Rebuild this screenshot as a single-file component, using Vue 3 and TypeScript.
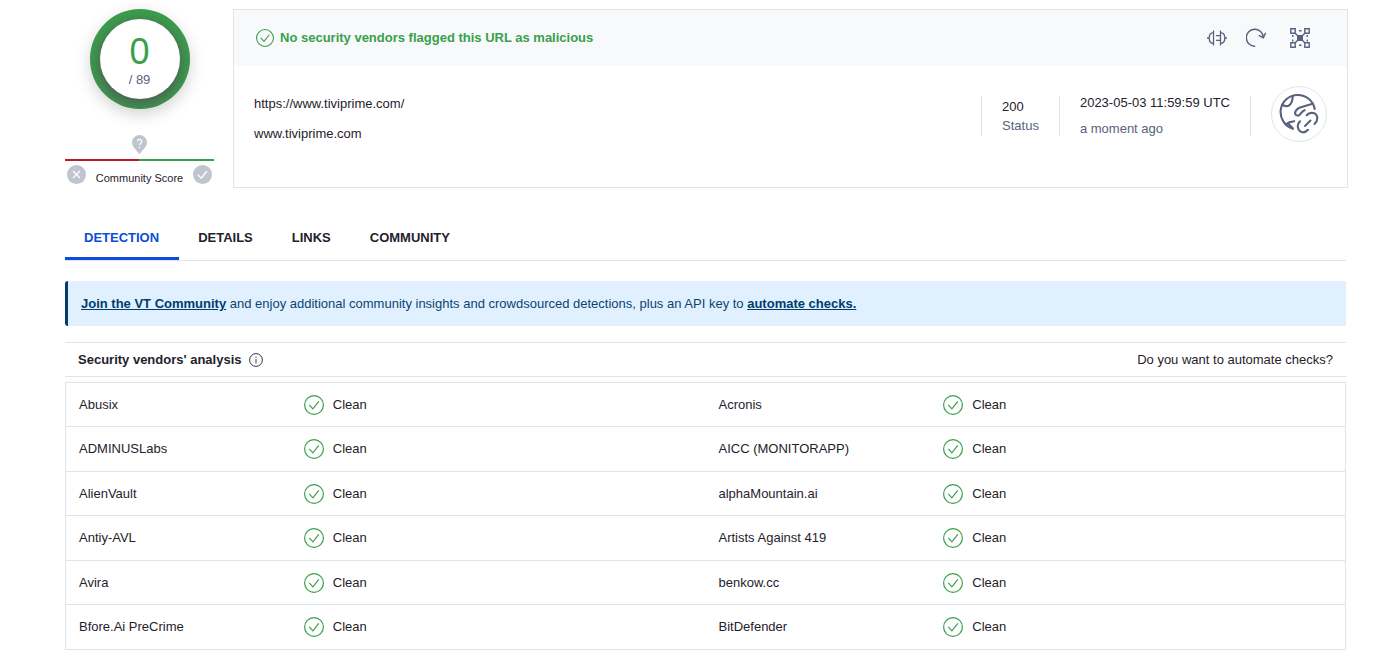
<script setup lang="ts">
import { ref } from 'vue'

const tabs: string[] = ['Detection', 'Details', 'Links', 'Community']
const active = ref<string>('Detection')

interface Verdict {
  left: string
  right: string
}

const rows: Verdict[] = [
  { left: 'Abusix', right: 'Acronis' },
  { left: 'ADMINUSLabs', right: 'AICC (MONITORAPP)' },
  { left: 'AlienVault', right: 'alphaMountain.ai' },
  { left: 'Antiy-AVL', right: 'Artists Against 419' },
  { left: 'Avira', right: 'benkow.cc' },
  { left: 'Bfore.Ai PreCrime', right: 'BitDefender' },
]
</script>

<template>
  <main class="page">
    <section class="summary">
      <div class="score">
        <div class="ring">
          <div class="dial">
            <span class="positives">0</span>
            <span class="total">/ 89</span>
          </div>
        </div>
        <svg class="pin" width="15" height="20" viewBox="0 0 15 20" aria-hidden="true">
          <path d="M7.500 0A7.500 7.500 0 0 1 15 7.500C15 12 10.500 14.500 7.500 19.500C4.500 14.500 0 12 0 7.500A7.500 7.500 0 0 1 7.500 0Z" fill="#c0c4d0" />
          <path d="M5.400 6.500C5.400 3.600 9.700 3.700 9.700 6.400C9.700 8.200 7.600 8.200 7.600 10.200" fill="none" stroke="#fff" stroke-width="1.200" />
          <circle cx="7.600" cy="12.300" r=".8" fill="#fff" />
        </svg>
        <div class="meter"></div>
        <div class="votes">
          <button class="vote" type="button" aria-label="Vote malicious">
            <svg width="19" height="19" viewBox="0 0 19 19"><path d="M6 6l7 7M13 6l-7 7" fill="none" stroke="#fff" stroke-width="1.300" /></svg>
          </button>
          <span class="votes-label">Community Score</span>
          <button class="vote" type="button" aria-label="Vote harmless">
            <svg width="19" height="19" viewBox="0 0 19 19"><path d="M4.800 9.600l3.400 3.600 5.800-7.200" fill="none" stroke="#fff" stroke-width="1.300" /></svg>
          </button>
        </div>
      </div>

      <article class="card">
        <header class="card-head">
          <svg class="ok" width="18" height="18" viewBox="0 0 20 20" aria-hidden="true">
            <circle cx="10" cy="10" r="9.400" /><path d="M5.300 9.800l3.600 4 5.900-7.400" />
          </svg>
          <strong class="verdict">No security vendors flagged this URL as malicious</strong>
          <div class="actions">
            <button type="button" aria-label="Search similar">
              <svg width="20" height="20" viewBox="0 0 20 20" fill="none" stroke="#58627c" stroke-width="1.300">
                <path d="M6.500 2.500v15M6.500 4.600C3.500 4.600 2.200 7 2.200 10s1.300 5.400 4.300 5.400M0 10h2.200M13.500 2.500v15M13.500 4.600c3 0 4.300 2.400 4.300 5.400s-1.300 5.400-4.300 5.400M17.800 10H20M9 7.700h4.500M9 12.300h4.500" />
              </svg>
            </button>
            <button type="button" aria-label="Reanalyze">
              <svg width="21" height="20" viewBox="0 0 21 20" fill="none" stroke="#58627c" stroke-width="1.400">
                <path d="M9.200 18.200A8.500 8.500 0 1 1 17.300 9.300M12.700 7.300l4.700 2.500 2.200-5" />
              </svg>
            </button>
            <button type="button" aria-label="Open in graph">
              <svg width="20" height="20" viewBox="0 0 20 20" fill="none" stroke="#58627c" stroke-width="1.400">
                <path d="M.8.8h4.400v4.400H.8zM14.800.8h4.400v4.400h-4.400zM.8 14.800h4.400v4.400H.8zM14.800 14.800h4.400v4.400h-4.400z" />
                <path d="M5.200 5.200l9.600 9.600M14.800 5.200l-9.600 9.600" />
                <path d="M9 2.700h2.500M9 17.300h2.500M2.700 7v2M2.700 11.500v2M17.300 7v2M17.300 11.500v2" />
                <path d="M7 7h6v6H7z" fill="#58627c" stroke="none" />
              </svg>
            </button>
          </div>
        </header>
        <div class="card-body">
          <div class="target">
            <span>https://www.tiviprime.com/</span>
            <span>www.tiviprime.com</span>
          </div>
          <div class="fact status">
            <span>200</span>
            <span class="muted">Status</span>
          </div>
          <div class="fact date">
            <span>2023-05-03 11:59:59 UTC</span>
            <span class="muted">a moment ago</span>
          </div>
          <div class="fact kind">
            <div class="globe">
              <svg width="40" height="42" viewBox="0 0 40 42" fill="none" stroke="#58627c" stroke-width="2.100" stroke-linecap="round" stroke-linejoin="round" aria-hidden="true">
                <path d="M13.800 35.600A17.200 17.200 0 1 1 35.700 16" />
                <path d="M3.600 12c5.200 3 9.800.2 10.200-9" />
                <path d="M33.700 10.800L21 14.500c-4.500 1.800-6 5.600-4 7.500 2.300 1.600 3.900-.2 5-1.800 1.200-1.600 2-2.400 3.600-3" />
                <path d="M6.700 31.500c2.500-2.400 4.500-3 8.600-3.300M9.300 30.500l4.500 5" />
                <path d="M27.700 22.200c3.600-4.200 10.600-2.400 10.600 3 0 3-1.200 4.400-2.800 5.800M21 28.300c-3.800 3.800-2.300 9.600 1.700 10.800 2.800.8 4.800-.6 6.300-2.300M26 33l5.500-5.500" />
              </svg>
            </div>
          </div>
        </div>
      </article>
    </section>

    <div class="content">
      <nav class="tabs" role="tablist">
        <button
          v-for="tab in tabs"
          :key="tab"
          type="button"
          role="tab"
          class="tab"
          :class="{ active: tab === active }"
          :aria-selected="tab === active"
          @click="active = tab"
        >{{ tab }}</button>
      </nav>

      <p class="banner">
        <a href="#">Join the VT Community</a> and enjoy additional community insights and crowdsourced detections, plus an API key to <a href="#">automate checks.</a>
      </p>

      <div class="analysis-head">
        <h2>Security vendors' analysis</h2>
        <svg width="14" height="14" viewBox="0 0 14 14" aria-hidden="true">
          <circle cx="7" cy="7" r="6.400" fill="none" stroke="#33363f" />
          <path d="M7 6v4.500M7 3.600v1.200" stroke="#33363f" />
        </svg>
        <a class="automate" href="#">Do you want to automate checks?</a>
      </div>

      <table class="vendors" aria-label="Security vendors' analysis">
        <tbody>
          <tr v-for="row in rows" :key="row.left">
            <template v-for="name in [row.left, row.right]" :key="name">
              <td class="name">{{ name }}</td>
              <td class="result">
                <span class="clean">
                  <svg class="ok" width="20" height="20" viewBox="0 0 20 20" aria-hidden="true">
                    <circle cx="10" cy="10" r="9.400" /><path d="M5.300 9.800l3.600 4 5.900-7.400" />
                  </svg>
                  Clean
                </span>
              </td>
            </template>
          </tr>
        </tbody>
      </table>
    </div>
  </main>
</template>

<style>
body {
  margin: 0;
  background: #fff;
}
</style>

<style scoped>
.page {
  box-sizing: border-box;
  padding: 9px 28px 0 65px;
  font-family: "Liberation Sans", Arial, sans-serif;
  font-size: 13px;
  line-height: 20px;
  color: #1f222b;
}
button {
  border: 0;
  padding: 0;
  background: none;
  font: inherit;
  color: inherit;
  cursor: pointer;
}
svg {
  display: block;
  flex: none;
}
.summary {
  display: flex;
  gap: 19px;
}
.score {
  flex: none;
  width: 149px;
  display: flex;
  flex-direction: column;
  align-items: center;
}
.ring {
  display: grid;
  place-items: center;
  width: 100px;
  height: 100px;
  border-radius: 50%;
  background: #39a04b;
  box-shadow: 0 5px 16px rgba(0, 0, 0, 0.18);
  overflow: hidden;
}
.dial {
  box-sizing: border-box;
  display: flex;
  flex-direction: column;
  align-items: center;
  justify-content: center;
  width: 80px;
  height: 80px;
  padding-top: 5px;
  border-radius: 50%;
  background: #fff;
  box-shadow: 0 4px 16px rgba(88, 60, 90, 0.85);
}
.positives {
  font-size: 36px;
  line-height: 36px;
  color: #39a04b;
}
.total {
  color: #58627c;
}
.pin {
  margin-top: 26px;
}
.meter {
  width: 100%;
  height: 2px;
  margin-top: 4px;
  background: linear-gradient(90deg, #bb1c21 50%, #39a04b 50%);
}
.votes {
  box-sizing: border-box;
  width: 100%;
  display: flex;
  justify-content: space-between;
  padding: 4px 2px 0;
}
.vote {
  width: 19px;
  height: 19px;
  border-radius: 50%;
  background: #c0c4d0;
}
.votes-label {
  padding-top: 3px;
  font-size: 11px;
}
.card {
  flex: 1;
  border: 1px solid #e0e4ec;
}
.card-head {
  display: flex;
  align-items: center;
  height: 56px;
  padding: 0 37px 0 22px;
  background: #f7f9fb;
}
.ok {
  fill: none;
  stroke: #39a04b;
  stroke-width: 1.200;
}
.verdict {
  margin-left: 6px;
  color: #39a04b;
}
.actions {
  display: flex;
  gap: 19px;
  margin-left: auto;
}
.actions button:last-child {
  margin-left: 4px;
}
.card-body {
  display: flex;
  height: 101px;
  padding: 20px 20px 0;
}
.target {
  flex: 1;
  display: flex;
  flex-direction: column;
  gap: 10px;
  padding-top: 8px;
}
.fact {
  box-sizing: border-box;
  display: flex;
  flex-direction: column;
  justify-content: center;
  height: 40px;
  margin-top: 10px;
  padding: 0 20px;
  border-left: 1px solid #e0e4ec;
}
.status {
  line-height: 19px;
}
.date {
  gap: 6px;
}
.kind {
  padding: 0 0 4px 20px;
}
.muted {
  color: #58627c;
}
.globe {
  flex: none;
  box-sizing: border-box;
  display: grid;
  place-items: center;
  width: 56px;
  height: 56px;
  border: 1px solid #e0e4ec;
  border-radius: 50%;
}
.content {
  padding-right: 2px;
}
.tabs {
  display: flex;
  margin-top: 28px;
  border-bottom: 1px solid #e0e4ec;
}
.tab {
  height: 44px;
  padding: 2px 20px 0 19px;
  border-bottom: 3px solid transparent;
  font-weight: bold;
  text-transform: uppercase;
}
.tab.active {
  border-bottom-color: #0b4dda;
  color: #0b4dda;
}
.banner {
  margin: 20px 0 16px;
  padding: 13px 13px 12px;
  border-left: 3px solid #003d6b;
  border-radius: 3px 0 0 3px;
  background: #e1f0ff;
  color: #0b4471;
}
.banner a {
  font-weight: bold;
  color: #003d6b;
}
.analysis-head {
  display: flex;
  align-items: center;
  gap: 7px;
  height: 33px;
  padding: 0 13px;
  border-top: 1px solid #e0e4ec;
  border-bottom: 1px solid #e0e4ec;
}
.analysis-head h2 {
  margin: 0;
  font-size: 13px;
}
.automate {
  margin-left: auto;
  color: inherit;
  text-decoration: none;
}
.vendors {
  box-sizing: border-box;
  width: 100%;
  margin-top: 5px;
  table-layout: fixed;
  border: 1px solid #e0e4ec;
  border-spacing: 0;
}
.vendors td {
  box-sizing: border-box;
  height: 44px;
  padding: 0 0 0 13px;
  border-bottom: 1px solid #e0e4ec;
}
.vendors tr:nth-child(even) td {
  height: 45px;
}
.vendors tr:last-child td {
  height: 44px;
  border-bottom: 0;
}
.vendors .name {
  width: 17.5%;
}
.vendors .result {
  padding-left: 14px;
}
.clean {
  display: flex;
  align-items: center;
  gap: 9px;
}
</style>
